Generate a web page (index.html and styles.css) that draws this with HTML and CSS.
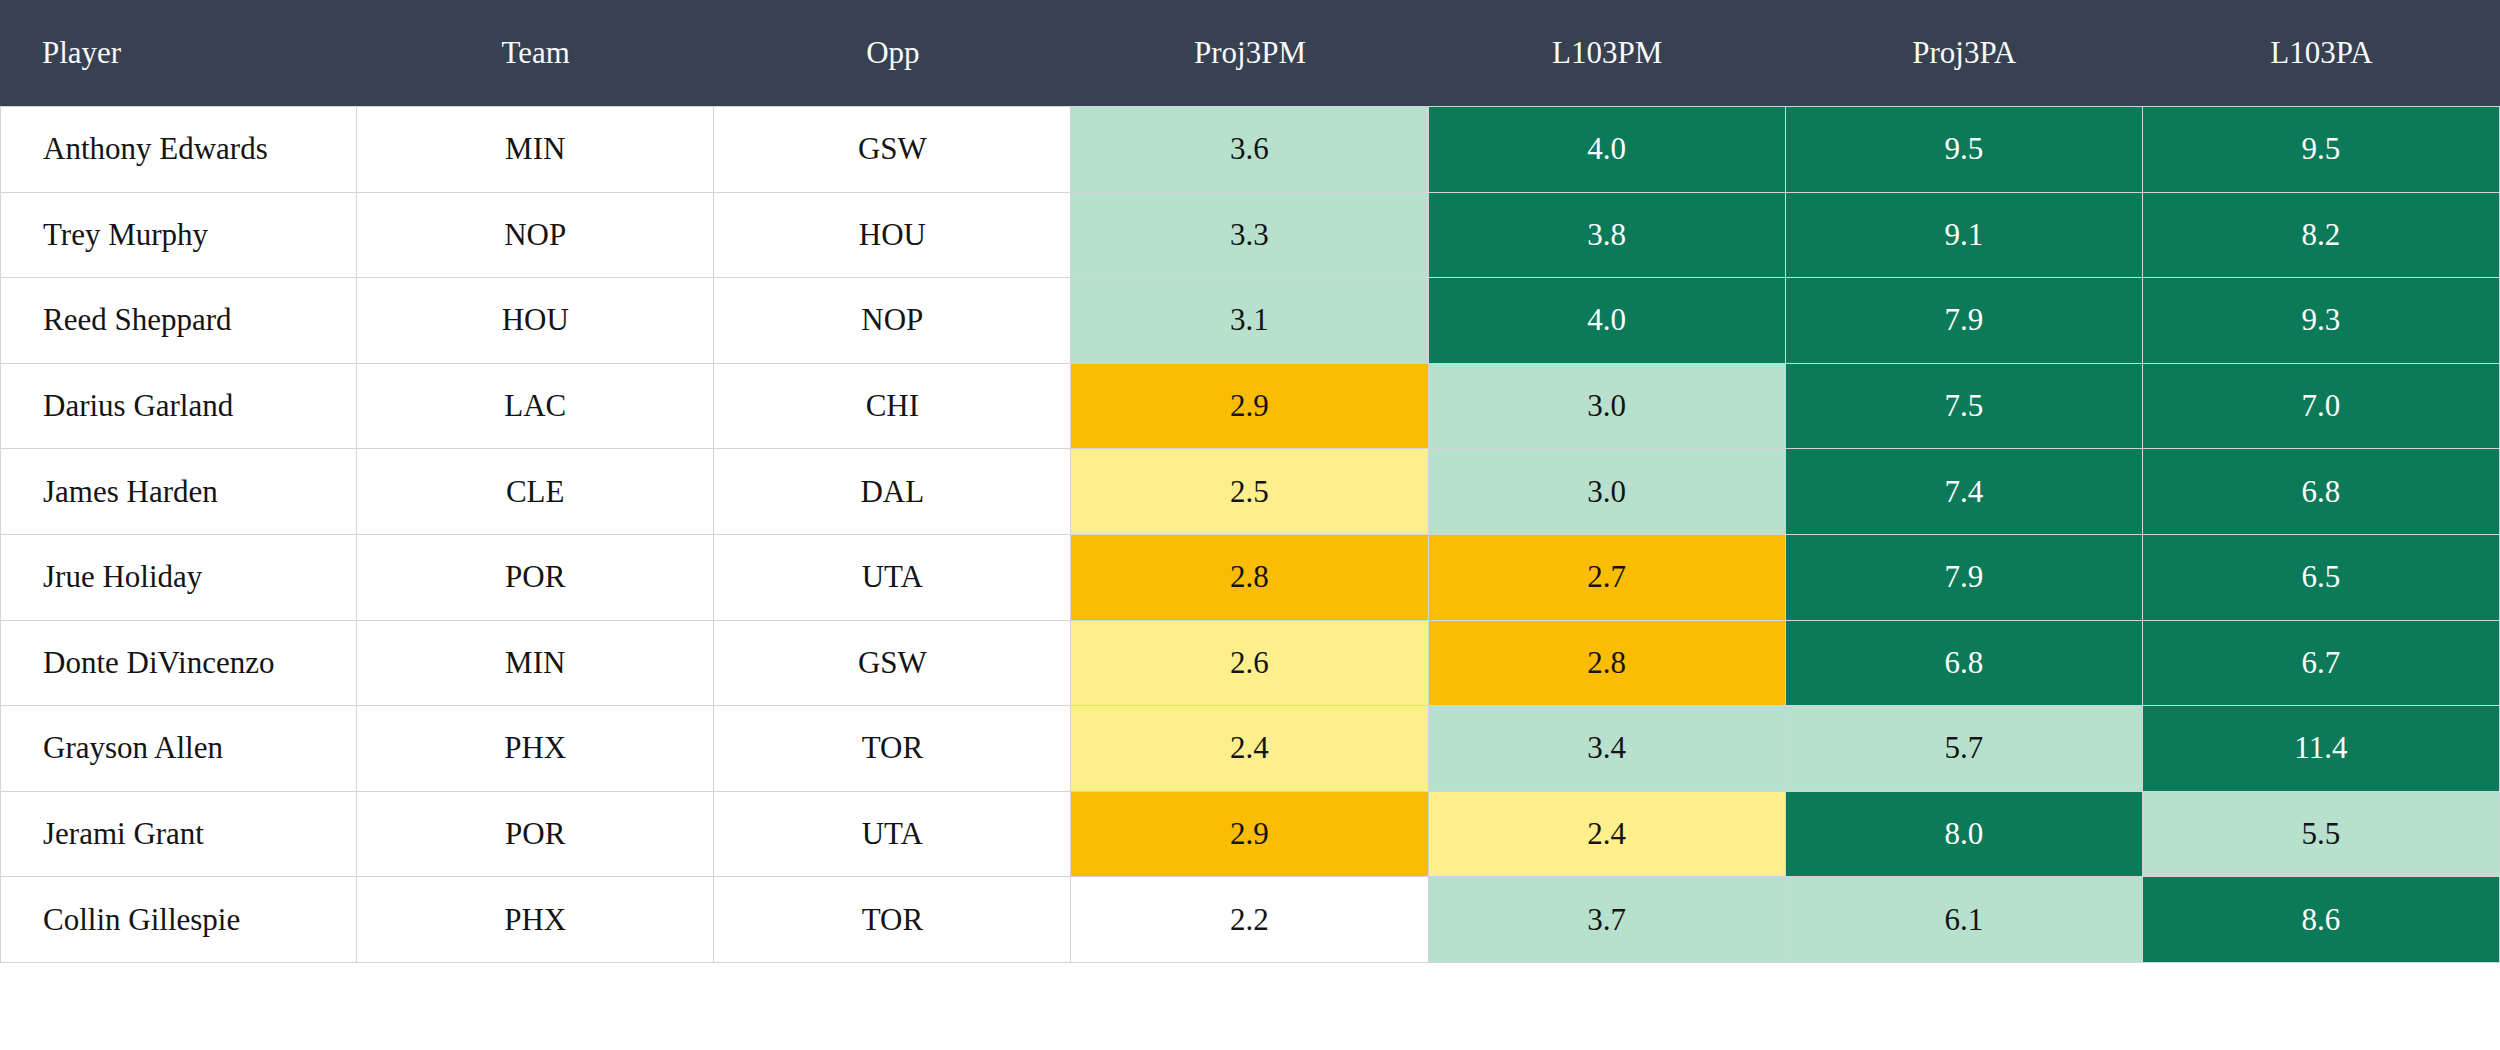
FILE: index.html
```html
<!DOCTYPE html>
<html>
<head>
<meta charset="utf-8">
<link rel="stylesheet" href="styles.css">
</head>
<body>
<div class="table">
  <div class="th first">Player</div><div class="th">Team</div><div class="th">Opp</div><div class="th">Proj3PM</div><div class="th">L103PM</div><div class="th">Proj3PA</div><div class="th">L103PA</div>

  <div class="td name">Anthony Edwards</div><div class="td">MIN</div><div class="td">GSW</div><div class="td lg">3.6</div><div class="td dg">4.0</div><div class="td dg">9.5</div><div class="td dg">9.5</div>
  <div class="td name">Trey Murphy</div><div class="td">NOP</div><div class="td">HOU</div><div class="td lg">3.3</div><div class="td dg">3.8</div><div class="td dg">9.1</div><div class="td dg">8.2</div>
  <div class="td name">Reed Sheppard</div><div class="td">HOU</div><div class="td">NOP</div><div class="td lg">3.1</div><div class="td dg">4.0</div><div class="td dg">7.9</div><div class="td dg">9.3</div>
  <div class="td name">Darius Garland</div><div class="td">LAC</div><div class="td">CHI</div><div class="td or">2.9</div><div class="td lg">3.0</div><div class="td dg">7.5</div><div class="td dg">7.0</div>
  <div class="td name">James Harden</div><div class="td">CLE</div><div class="td">DAL</div><div class="td yl">2.5</div><div class="td lg">3.0</div><div class="td dg">7.4</div><div class="td dg">6.8</div>
  <div class="td name">Jrue Holiday</div><div class="td">POR</div><div class="td">UTA</div><div class="td or">2.8</div><div class="td or">2.7</div><div class="td dg">7.9</div><div class="td dg">6.5</div>
  <div class="td name">Donte DiVincenzo</div><div class="td">MIN</div><div class="td">GSW</div><div class="td yl">2.6</div><div class="td or">2.8</div><div class="td dg">6.8</div><div class="td dg">6.7</div>
  <div class="td name">Grayson Allen</div><div class="td">PHX</div><div class="td">TOR</div><div class="td yl">2.4</div><div class="td lg">3.4</div><div class="td lg">5.7</div><div class="td dg">11.4</div>
  <div class="td name">Jerami Grant</div><div class="td">POR</div><div class="td">UTA</div><div class="td or">2.9</div><div class="td yl">2.4</div><div class="td dg">8.0</div><div class="td lg">5.5</div>
  <div class="td name">Collin Gillespie</div><div class="td">PHX</div><div class="td">TOR</div><div class="td">2.2</div><div class="td lg">3.7</div><div class="td lg">6.1</div><div class="td dg">8.6</div>
</div>
</body>
</html>
```

FILE: styles.css
```css
html, body {
  margin: 0;
  padding: 0;
  background: #ffffff;
}
body {
  font-family: Georgia, "Liberation Serif", serif;
  font-size: 31px;
  color: #141414;
}
.table {
  display: grid;
  grid-template-columns: repeat(7, 1fr);
  width: 2500px;
}
.th {
  box-sizing: border-box;
  height: 107px;
  background: #374151;
  color: #f9fafb;
  display: flex;
  align-items: center;
  justify-content: center;
  border-bottom: 1px solid #d1d5db;
}
.th.first {
  justify-content: flex-start;
  padding-left: 42px;
}
.td {
  box-sizing: border-box;
  height: 85.6px;
  display: flex;
  align-items: center;
  justify-content: center;
  border-right: 1px solid #d1d5db;
  border-bottom: 1px solid #d1d5db;
  background: #ffffff;
}
.td.name {
  justify-content: flex-start;
  padding-left: 42px;
  border-left: 1px solid #d1d5db;
}
.lg { background: #b7e1cd; }
.dg { background: #0b7a58; color: #ffffff; }
.or { background: #fbbc04; }
.yl { background: #fdef8c; }
```
